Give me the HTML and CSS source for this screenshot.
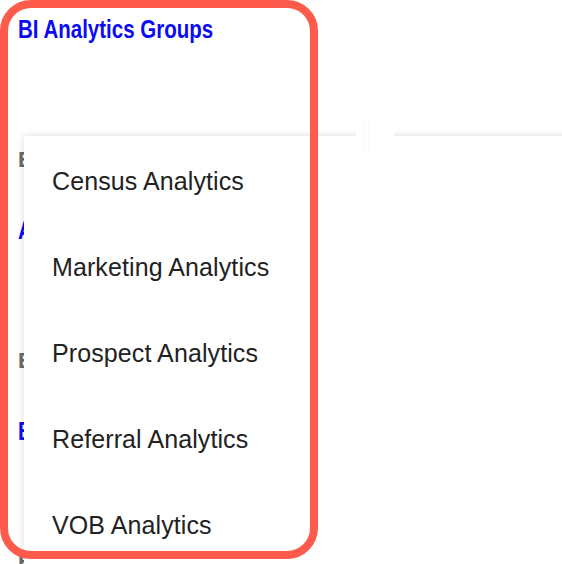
FILE: index.html
```html
<!DOCTYPE html>
<html>
<head>
<meta charset="utf-8">
<link rel="stylesheet" href="styles.css">
</head>
<body>
<div class="page">
  <section class="group">
    <h2 class="group-title"><span>BI Analytics Groups</span></h2>
    <p class="group-sub">Business Intelligence</p>
  </section>
  <section class="group">
    <h2 class="group-title"><span>Analytics Dashboards</span></h2>
    <p class="group-sub">Business Reports</p>
  </section>
  <section class="group">
    <h2 class="group-title"><span>BI Reports</span></h2>
    <p class="group-sub">Business Summary</p>
  </section>
</div>

<div class="menu">
  <div class="menu-item">Census Analytics</div>
  <div class="menu-item">Marketing Analytics</div>
  <div class="menu-item">Prospect Analytics</div>
  <div class="menu-item">Referral Analytics</div>
  <div class="menu-item">VOB Analytics</div>
</div>
<div class="menu-notch"></div>

<div class="highlight"></div>
</body>
</html>
```

FILE: styles.css
```css
html, body {
  margin: 0;
  padding: 0;
  background: #ffffff;
  overflow: hidden;
}

body {
  width: 562px;
  height: 564px;
  position: relative;
  font-family: "Liberation Sans", Arial, sans-serif;
}

.page {
  padding: 14px 0 0 18px;
}

.group {
  height: 201px;
}

.group-title {
  margin: 0;
  height: 30px;
  line-height: 30px;
  font-size: 25px;
  font-weight: bold;
  color: #0b0bf2;
  white-space: nowrap;
}

.group-title span {
  display: inline-block;
  transform: scaleX(0.82);
  transform-origin: left center;
}

.group-sub {
  margin: 103px 0 0 0;
  line-height: 26px;
  font-size: 22px;
  font-weight: bold;
  color: #6a6a6a;
  white-space: nowrap;
}

.menu {
  position: absolute;
  left: 24px;
  top: 136px;
  right: -20px;
  bottom: -40px;
  padding-top: 2px;
  background: #ffffff;
  box-shadow: 0 0 7px rgba(0, 0, 0, 0.14);
}

.menu-item {
  height: 86px;
  line-height: 86px;
  padding-left: 28px;
  font-size: 25px;
  letter-spacing: 0.1px;
  color: #222222;
  white-space: nowrap;
}

.menu-notch {
  position: absolute;
  left: 356px;
  top: 118px;
  width: 38px;
  height: 22px;
  background: #ffffff;
}

.menu-notch::after {
  content: "";
  position: absolute;
  left: 8px;
  top: 0;
  width: 3px;
  height: 40px;
  border-left: 1px solid #fbfbfb;
  border-right: 1px solid #fbfbfb;
}

.highlight {
  position: absolute;
  left: 0;
  top: 0;
  width: 318px;
  height: 559px;
  box-sizing: border-box;
  border: 8px solid #ff5b4c;
  border-radius: 31px;
}
```
